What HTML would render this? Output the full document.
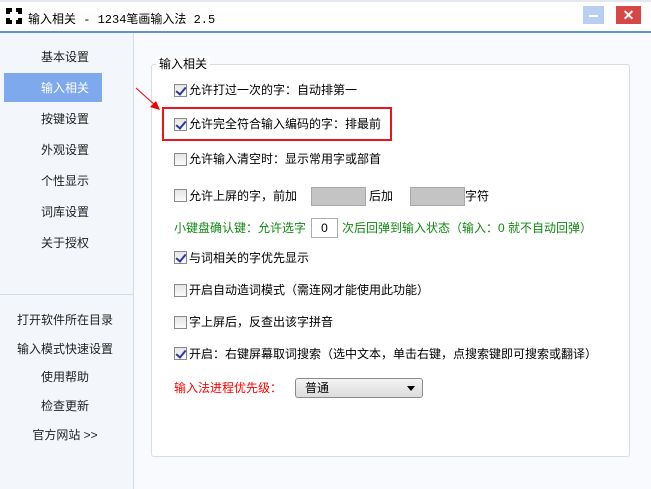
<!DOCTYPE html><html><head><meta charset="utf-8"><style>
*{margin:0;padding:0;box-sizing:border-box}
body{width:651px;height:489px;overflow:hidden;background:#f9fafd;font:12px "Liberation Sans","Noto Sans CJK SC",sans-serif;color:#000;position:relative}
.a{position:absolute;white-space:nowrap}
#tb{left:0;top:0;width:651px;height:33px;background:#fff;border-top:2px solid #e4e9f1;border-bottom:2px solid #5b92de}
#side{left:0;top:33px;width:134px;height:456px;background:#f3f6fb;border-right:1px solid #d3dceb}
.si{position:absolute;left:0;width:130px;text-align:center;color:#222;line-height:16px}
.cb{position:absolute;width:13px;height:13px;border:1px solid #8a8a8a;background:linear-gradient(#e6e6e6,#fafafa)}
.cb.on::after{content:"";position:absolute;left:3px;top:0px;width:4px;height:8px;border:solid #2a3d9a;border-width:0 2px 2px 0;transform:rotate(40deg)}
.t{position:absolute;line-height:16px}
.box{position:absolute;height:19px;background:#c4c4c4;border:1px solid #a8a8a8}
</style></head><body>
<div class="a" id="tb"></div>
<svg class="a" style="left:6px;top:8px" width="16" height="16"><rect x="0" y="0" width="16" height="16"/><rect x="6" y="0" width="4" height="16" fill="#fff"/><rect x="0" y="6" width="16" height="4" fill="#fff"/><rect x="4" y="4" width="8" height="8" fill="#fff"/></svg>
<div class="a" style="left:28px;top:10px;font-family:'Liberation Mono','Noto Sans CJK SC',monospace">输入相关 - 1234笔画输入法 2.5</div>
<div class="a" style="left:467px;top:6px;width:1px;height:1px"></div>
<div class="a" style="left:583px;top:6px;width:21px;height:18px;background:#b8cff2"><div style="position:absolute;left:6px;top:9px;width:9px;height:2px;background:#fff"></div></div>
<div class="a" style="left:616px;top:6px;width:25px;height:18px;background:#d64848;color:#fff;font-weight:bold;text-align:center;line-height:18px;font-size:14px">✕</div>
<div class="a" id="side"></div>
<div class="si" style="top:49px">基本设置</div>
<div class="a" style="left:4px;top:73px;width:98px;height:29px;background:#7ea9ec"></div>
<div class="si" style="top:80px;color:#fff;left:0;width:130px">输入相关</div>
<div class="si" style="top:111px">按键设置</div>
<div class="si" style="top:142px">外观设置</div>
<div class="si" style="top:173px">个性显示</div>
<div class="si" style="top:204px">词库设置</div>
<div class="si" style="top:235px">关于授权</div>
<div class="a" style="left:0;top:294px;width:133px;height:1px;background:#d3dceb"></div>
<div class="si" style="top:312px">打开软件所在目录</div>
<div class="si" style="top:341px">输入模式快速设置</div>
<div class="si" style="top:369px">使用帮助</div>
<div class="si" style="top:398px">检查更新</div>
<div class="si" style="top:427px">官方网站 &gt;&gt;</div>
<div class="a" style="left:151px;top:64px;width:479px;height:393px;background:#fff;border:1px solid #d6dde3;border-radius:3px"></div>
<svg class="a" style="left:134px;top:86px;z-index:5" width="30" height="30"><line x1="2" y1="2" x2="22" y2="20" stroke="#e00" stroke-width="1"/><polygon points="26,24 16,21 22,15" fill="#e00"/></svg>
<div class="a" style="left:156px;top:56px;background:#fff;padding:0 3px;line-height:16px">输入相关</div>
<div class="cb on" style="left:174px;top:84px"></div><div class="t" style="left:189px;top:82px">允许打过一次的字：自动排第一</div>
<div class="a" style="left:162px;top:107px;width:230px;height:34px;border:2px solid #e8161a"></div>
<div class="cb on" style="left:174px;top:118px"></div><div class="t" style="left:189px;top:116px">允许完全符合输入编码的字：排最前</div>
<div class="cb" style="left:174px;top:153px"></div><div class="t" style="left:189px;top:151px">允许输入清空时：显示常用字或部首</div>
<div class="cb" style="left:174px;top:189px"></div><div class="t" style="left:189px;top:188px">允许上屏的字，前加</div>
<div class="box" style="left:311px;top:187px;width:55px"></div><div class="t" style="left:369px;top:188px">后加</div>
<div class="box" style="left:410px;top:187px;width:55px"></div><div class="t" style="left:465px;top:188px">字符</div>
<div class="t" style="left:174px;top:220px;color:#118811">小键盘确认键：允许选字</div>
<div class="a" style="left:311px;top:218px;width:27px;height:20px;border:1px solid #abadb3;background:#fff;text-align:center;line-height:18px">0</div>
<div class="t" style="left:342px;top:220px;color:#118811">次后回弹到输入状态（输入：0 就不自动回弹）</div>
<div class="cb on" style="left:174px;top:251px"></div><div class="t" style="left:189px;top:250px">与词相关的字优先显示</div>
<div class="cb" style="left:174px;top:284px"></div><div class="t" style="left:189px;top:282px">开启自动造词模式（需连网才能使用此功能）</div>
<div class="cb" style="left:174px;top:316px"></div><div class="t" style="left:189px;top:314px">字上屏后，反查出该字拼音</div>
<div class="cb on" style="left:174px;top:347px"></div><div class="t" style="left:189px;top:346px">开启：右键屏幕取词搜索（选中文本，单击右键，点搜索键即可搜索或翻译）</div>
<div class="t" style="left:174px;top:380px;color:#f00">输入法进程优先级：</div>
<div class="a" style="left:295px;top:378px;width:128px;height:20px;border:1px solid #8c8c8c;border-radius:3px;background:linear-gradient(#f4f4f4,#dcdcdc);line-height:18px;padding-left:9px">普通<div style="position:absolute;right:7px;top:7px;border:4px solid transparent;border-top:5px solid #000"></div></div>
</body></html>
